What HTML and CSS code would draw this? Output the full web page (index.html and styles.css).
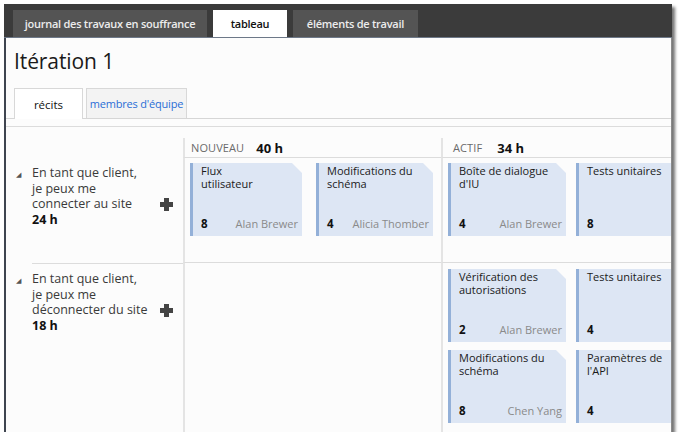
FILE: index.html
```html
<!DOCTYPE html>
<html lang="fr">
<head>
<meta charset="utf-8">
<link rel="stylesheet" href="styles.css">
</head>
<body>
<div class="window">
  <div class="topbar">
    <div class="tab tab-wide">journal des travaux en souffrance</div>
    <div class="tab tab-active">tableau</div>
    <div class="tab tab-items">éléments de travail</div>
  </div>
  <div class="content">
    <h1 class="title">Itération 1</h1>
    <div class="subtabs">
      <div class="subtab subtab-active">récits</div>
      <div class="subtab subtab-link">membres d'équipe</div>
    </div>
    <div class="board">
      <div class="head-label"></div>
      <div class="head-col head-new"><span class="state">NOUVEAU</span><span class="hours">40 h</span></div>
      <div class="head-col head-active"><span class="state">ACTIF</span><span class="hours">34 h</span></div>

      <div class="row-label first">
        <span class="twisty">◢</span>
        <div class="story">En tant que client,<br>je peux me<br>connecter au site<br><b>24 h</b></div>
        <span class="plus"></span>
      </div>
      <div class="cell cell-new">
        <div class="card"><div class="card-title">Flux<br>utilisateur</div><div class="card-foot"><b>8</b><span class="owner">Alan Brewer</span></div></div>
        <div class="card"><div class="card-title">Modifications du<br>schéma</div><div class="card-foot"><b>4</b><span class="owner">Alicia Thomber</span></div></div>
      </div>
      <div class="cell cell-active">
        <div class="card"><div class="card-title">Boîte de dialogue<br>d'IU</div><div class="card-foot"><b>4</b><span class="owner">Alan Brewer</span></div></div>
        <div class="card card-plain"><div class="card-title">Tests unitaires</div><div class="card-foot"><b>8</b></div></div>
      </div>

      <div class="row-label">
        <span class="twisty">◢</span>
        <div class="story">En tant que client,<br>je peux me<br>déconnecter du site<br><b>18 h</b></div>
        <span class="plus"></span>
      </div>
      <div class="cell cell-new last"></div>
      <div class="cell cell-active last">
        <div class="card"><div class="card-title">Vérification des<br>autorisations</div><div class="card-foot"><b>2</b><span class="owner">Alan Brewer</span></div></div>
        <div class="card card-plain"><div class="card-title">Tests unitaires</div><div class="card-foot"><b>4</b></div></div>
        <div class="card"><div class="card-title">Modifications du<br>schéma</div><div class="card-foot"><b>8</b><span class="owner">Chen Yang</span></div></div>
        <div class="card card-plain"><div class="card-title">Paramètres de<br>l'API</div><div class="card-foot"><b>4</b></div></div>
      </div>
    </div>
  </div>
</div>
</body>
</html>
```

FILE: styles.css
```css
* { box-sizing: border-box; }
html, body { margin: 0; padding: 0; background: #ffffff; }
body { font-family: "Open Sans", "Noto Sans", sans-serif; color: #222; }

.window {
  margin: 4px 0 0 4px;
  width: 668px;
  height: 428px;
  display: flex;
  flex-direction: column;
  background: #fcfcfc;
  box-shadow: 3px 3px 3px rgba(0,0,0,0.55);
  overflow: hidden;
}

.topbar {
  height: 34px;
  flex: none;
  background: #3b3b3b;
  display: flex;
  align-items: flex-end;
  gap: 6px;
  padding-left: 9px;
  border-bottom: 1px solid #6d7888;
}
.tab {
  height: 27px;
  display: flex;
  align-items: center;
  justify-content: center;
  background: #545454;
  color: #ececec;
  font-size: 11px;
  font-weight: 600;
  letter-spacing: -0.25px;
  white-space: nowrap;
}
.tab-wide { width: 194px; }
.tab-active { width: 74px; background: #ffffff; color: #111; }
.tab-items { width: 125px; }

.content {
  flex: 1;
  border-left: 2px solid #3f4550;
  border-right: 1px solid #8a8a8a;
  display: flex;
  flex-direction: column;
  min-height: 0;
}

.title {
  margin: 0;
  padding: 9px 0 0 8px;
  height: 50px;
  flex: none;
  font-size: 21px;
  line-height: 28px;
  font-weight: 400;
  color: #1a1a1a;
  letter-spacing: -0.1px;
}

.subtabs {
  display: flex;
  gap: 3px;
  padding-left: 8px;
  border-bottom: 1px solid #d6d6d6;
  height: 31px;
  flex: none;
  align-items: flex-end;
}
.subtab {
  height: 30px;
  display: flex;
  align-items: center;
  justify-content: center;
  font-size: 11.5px;
  white-space: nowrap;
  border: 1px solid #d8d8d8;
  border-bottom: none;
}
.subtab-active { width: 69px; background: #ffffff; color: #111; margin-bottom: -1px; height: 31px; }
.subtab-link { width: 101px; background: #f3f3f3; color: #2a6ed6; font-size: 11px; letter-spacing: -0.2px; }

.board {
  margin-top: 7px;
  border-top: 1px solid #dcdcdc;
  flex: 1;
  display: grid;
  grid-template-columns: 177px 258px 1fr;
  grid-template-rows: 31px 105px 1fr;
  min-height: 0;
}
.head-col {
  margin-top: 11px;
  border-bottom: 1px solid #dcdcdc;
  border-left: 2px solid #e4e4e4;
  display: flex;
  align-items: center;
  gap: 12px;
}
.head-new { padding-left: 6px; }
.head-active { padding-left: 10px; gap: 15px; }
.state { font-size: 11px; color: #6a6a6a; letter-spacing: 0.1px; }
.hours { font-size: 13px; font-weight: 700; color: #111; }

.row-label {
  display: flex;
  align-items: flex-start;
  padding-top: 7px;
  border-top: 1px solid #dcdcdc;
  margin-left: 26px;
}
.row-label.first { border-top: none; }
.twisty {
  font-size: 7px;
  color: #555;
  margin-left: -16px;
  width: 16px;
  margin-top: 5px;
  flex: none;
}
.story {
  font-size: 12.5px;
  line-height: 15.5px;
  color: #3a3a3a;
  width: 128px;
  flex: none;
}
.story b { color: #111; }
.plus {
  margin-top: 33px;
  width: 13px;
  height: 13px;
  flex: none;
  background:
    linear-gradient(#444, #444) center / 13px 5px no-repeat,
    linear-gradient(#444, #444) center / 5px 13px no-repeat;
}

.cell {
  display: grid;
  align-content: start;
  padding-top: 5px;
  padding-left: 5px;
  row-gap: 8px;
  border-left: 2px solid #e4e4e4;
  border-bottom: 1px solid #dcdcdc;
}
.cell-new {
  grid-template-columns: 112px 117px;
  column-gap: 14px;
}
.cell-active {
  grid-template-columns: 118px 1fr;
  column-gap: 10px;
}
.cell.last { border-bottom: none; padding-top: 6px; }

.card {
  height: 73px;
  background: #dde6f4;
  border-left: 3px solid #93b0d8;
  padding: 1px 4px 0 8px;
  display: flex;
  flex-direction: column;
  justify-content: space-between;
  clip-path: polygon(0 0, calc(100% - 10px) 0, 100% 10px, 100% 100%, 0 100%);
}
.card-plain { clip-path: none; }
.card-title {
  font-size: 11px;
  line-height: 13px;
  color: #1a1a1a;
}
.card-foot {
  display: flex;
  justify-content: space-between;
  align-items: baseline;
  height: 20px;
  font-size: 11.5px;
}
.card-foot b { color: #111; }
.owner { color: #8a8a8a; font-size: 11px; }
```
